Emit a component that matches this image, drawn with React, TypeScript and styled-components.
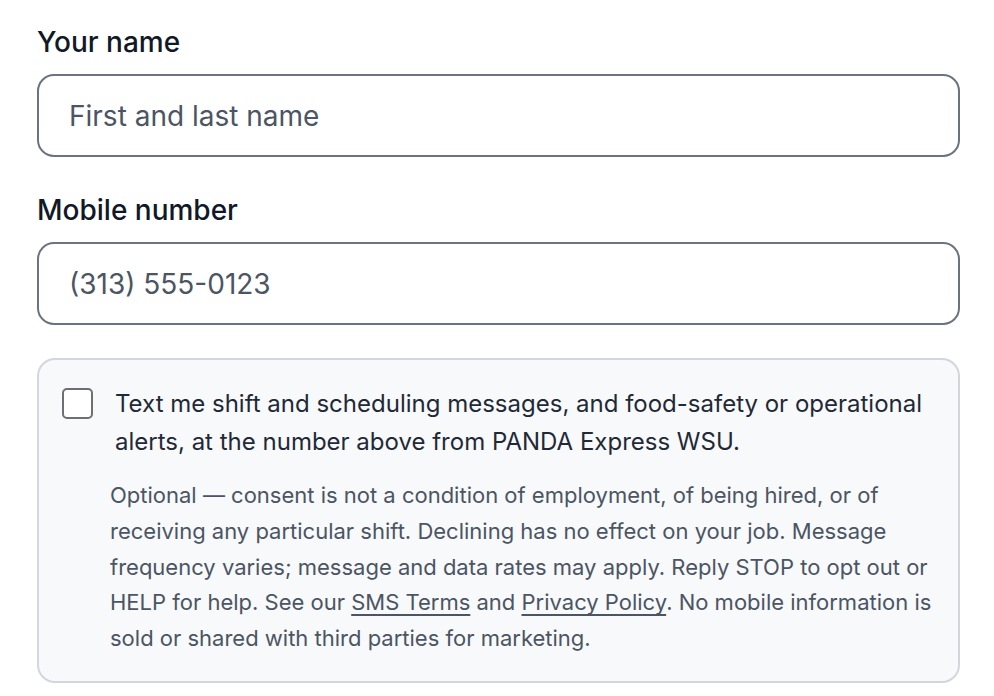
import React from 'react';
import styled, { createGlobalStyle } from 'styled-components';

const GlobalStyle = createGlobalStyle`
  html, body {
    margin: 0;
    padding: 0;
    background: #ffffff;
  }
  body {
    font-family: Inter, "Noto Sans", sans-serif;
    -webkit-font-smoothing: antialiased;
  }
`;

const Form = styled.form`
  display: flex;
  flex-direction: column;
  width: 923px;
  padding: 24px 0 0 37px;
`;

const Field = styled.div`
  display: flex;
  flex-direction: column;
  gap: 15px;
  margin-bottom: 35px;
`;

const Label = styled.label`
  padding-top: 1px;
  font-size: 28px;
  line-height: 34px;
  font-weight: 500;
  color: #111827;
`;

const Input = styled.input`
  box-sizing: border-box;
  height: 83px;
  width: 100%;
  padding: 0 30px;
  border: 2px solid #6b7280;
  border-radius: 17px;
  background: #ffffff;
  font-family: inherit;
  font-size: 28px;
  color: #111827;
  outline: none;
  &::placeholder {
    color: #4b5563;
    opacity: 1;
  }
`;

const ConsentCard = styled.div`
  box-sizing: border-box;
  margin-top: -2px;
  width: 923px;
  padding: 25px 22px 24px 23px;
  border: 2px solid #d4d6dd;
  border-radius: 18px;
  background: #f8f9fb;
`;

const CheckRow = styled.label`
  display: flex;
  align-items: flex-start;
  gap: 22px;
  cursor: pointer;
`;

const Box = styled.input`
  appearance: none;
  flex: none;
  box-sizing: border-box;
  width: 31px;
  height: 31px;
  margin: 3px 0 0 0;
  border: 2px solid #6e6e73;
  border-radius: 5px;
  background: #ffffff;
`;

const CheckText = styled.span`
  font-size: 24px;
  line-height: 38px;
  color: #1f2937;
`;

const Fine = styled.p`
  margin: 17px 0 0 48px;
  font-size: 22px;
  line-height: 35.75px;
  color: #4b5563;
`;

const Link = styled.a`
  color: inherit;
  text-decoration: underline;
  text-underline-offset: 4px;
  text-decoration-thickness: 2px;
`;

export default function App() {
  return (
    <>
      <GlobalStyle />
      <Form>
        <Field>
          <Label htmlFor="name">Your name</Label>
          <Input id="name" placeholder="First and last name" />
        </Field>
        <Field>
          <Label htmlFor="phone">Mobile number</Label>
          <Input id="phone" placeholder="(313) 555-0123" />
        </Field>
        <ConsentCard>
          <CheckRow>
            <Box type="checkbox" />
            <CheckText>
              Text me shift and scheduling messages, and food-safety or operational alerts, at the number above from PANDA Express WSU.
            </CheckText>
          </CheckRow>
          <Fine>
            Optional — consent is not a condition of employment, of being hired, or of receiving any particular shift. Declining has no effect on your job. Message frequency varies; message and data rates may apply. Reply STOP to opt out or HELP for help. See our <Link href="#">SMS Terms</Link> and <Link href="#">Privacy Policy</Link>. No mobile information is sold or shared with third parties for marketing.
          </Fine>
        </ConsentCard>
      </Form>
    </>
  );
}
